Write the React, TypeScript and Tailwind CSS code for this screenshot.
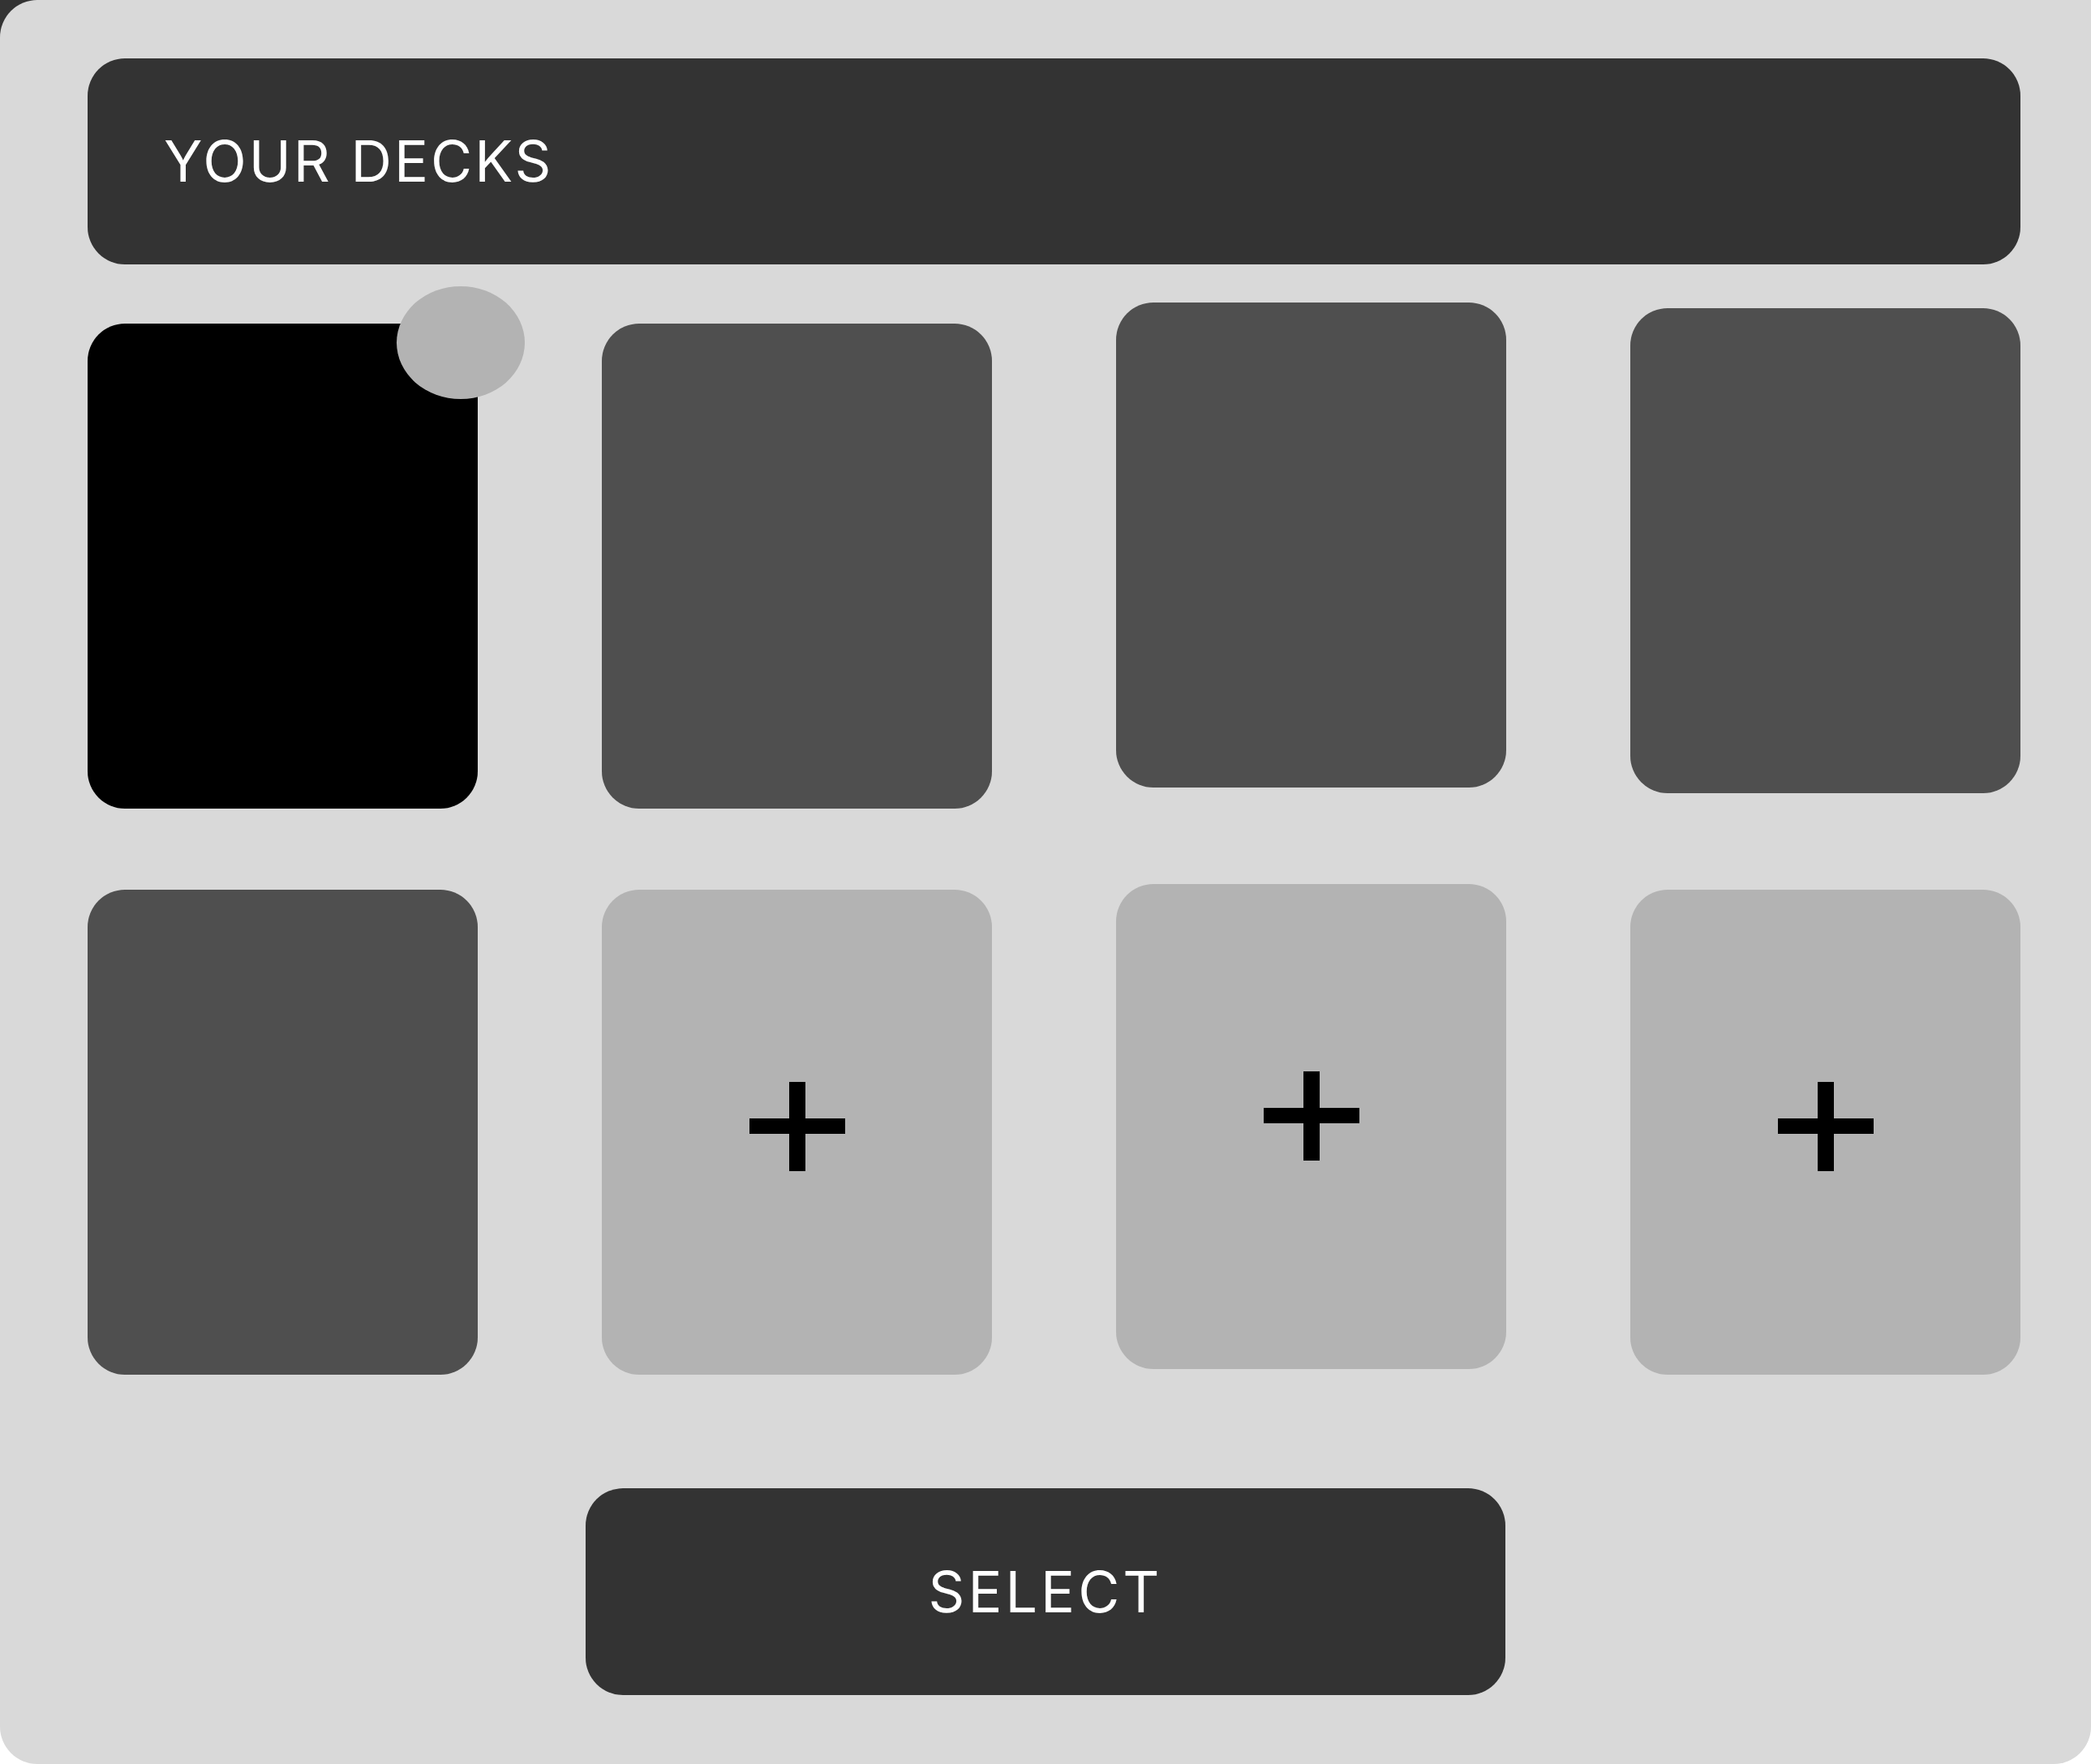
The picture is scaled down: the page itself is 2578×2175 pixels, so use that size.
import { Plus } from 'lucide-react';

type Deck = {
  id: number;
  kind: 'selected' | 'filled' | 'empty';
  offset: string;
  plusShift?: string;
};

const topRow: Deck[] = [
  { id: 1, kind: 'selected', offset: 'mt-[26px]' },
  { id: 2, kind: 'filled', offset: 'mt-[26px]' },
  { id: 3, kind: 'filled', offset: 'mt-0' },
  { id: 4, kind: 'filled', offset: 'mt-[7px]' },
];

const bottomRow: Deck[] = [
  { id: 5, kind: 'filled', offset: 'mt-[7px]' },
  { id: 6, kind: 'empty', offset: 'mt-[7px]', plusShift: 'mb-[14px]' },
  { id: 7, kind: 'empty', offset: 'mt-0', plusShift: 'mb-[26px]' },
  { id: 8, kind: 'empty', offset: 'mt-[7px]', plusShift: 'mb-[14px]' },
];

function PlusMark() {
  // chunky plus, drawn rather than typed so the bar weights line up
  return (
    <svg width="118" height="110" viewBox="0 0 118 110" aria-hidden="true">
      <rect x="0" y="45" width="118" height="19" fill="#000" />
      <rect x="49" y="0" width="20" height="110" fill="#000" />
    </svg>
  );
}

function DeckCard({ deck }: { deck: Deck }) {
  if (deck.kind === 'selected') {
    return (
      <div className={`relative h-[598px] rounded-[46px] bg-black ${deck.offset}`}>
        {/* selection marker */}
        <div className="absolute left-[381px] top-[-46px] w-[158px] h-[139px] rounded-[50%] bg-[#b3b3b3]"></div>
      </div>
    );
  }

  if (deck.kind === 'filled') {
    return <div className={`h-[598px] rounded-[46px] bg-[#4f4f4f] ${deck.offset}`}></div>;
  }

  return (
    <button
      type="button"
      className={`flex h-[598px] items-center justify-center rounded-[46px] bg-[#b3b3b3] ${deck.offset}`}
    >
      <span className={deck.plusShift}>
        <PlusMark />
      </span>
    </button>
  );
}

export default function App() {
  return (
    <div className="relative w-[2578px] h-[2175px] bg-white">
      <div className="absolute left-0 top-0 w-[60px] h-[60px] bg-[#333333]"></div>

      <div className="relative flex h-full flex-col rounded-tl-[46px] rounded-bl-[46px] rounded-br-[46px] bg-[#d9d9d9] pl-[108px] pr-[87px] pt-[72px] font-['Inter',sans-serif]">
        {/* Header */}
        <div className="flex h-[254px] items-center rounded-[46px] bg-[#333333] pl-[94px]">
          <h1 className="text-[70px] leading-none font-normal text-white tracking-[3px]">YOUR DECKS</h1>
        </div>

        {/* Deck grid */}
        <div className="mt-[47px] grid grid-cols-4 items-start gap-x-[153px]">
          {topRow.map((deck) => (
            <DeckCard key={deck.id} deck={deck} />
          ))}
        </div>
        <div className="mt-[93px] grid grid-cols-4 items-start gap-x-[153px]">
          {bottomRow.map((deck) => (
            <DeckCard key={deck.id} deck={deck} />
          ))}
        </div>

        {/* Select */}
        <button
          type="button"
          className="mt-[140px] ml-[614px] flex h-[255px] w-[1134px] items-center justify-center rounded-[46px] bg-[#333333] text-[70px] leading-none text-white tracking-[4px]"
        >
          SELECT
        </button>
      </div>
    </div>
  );
}
